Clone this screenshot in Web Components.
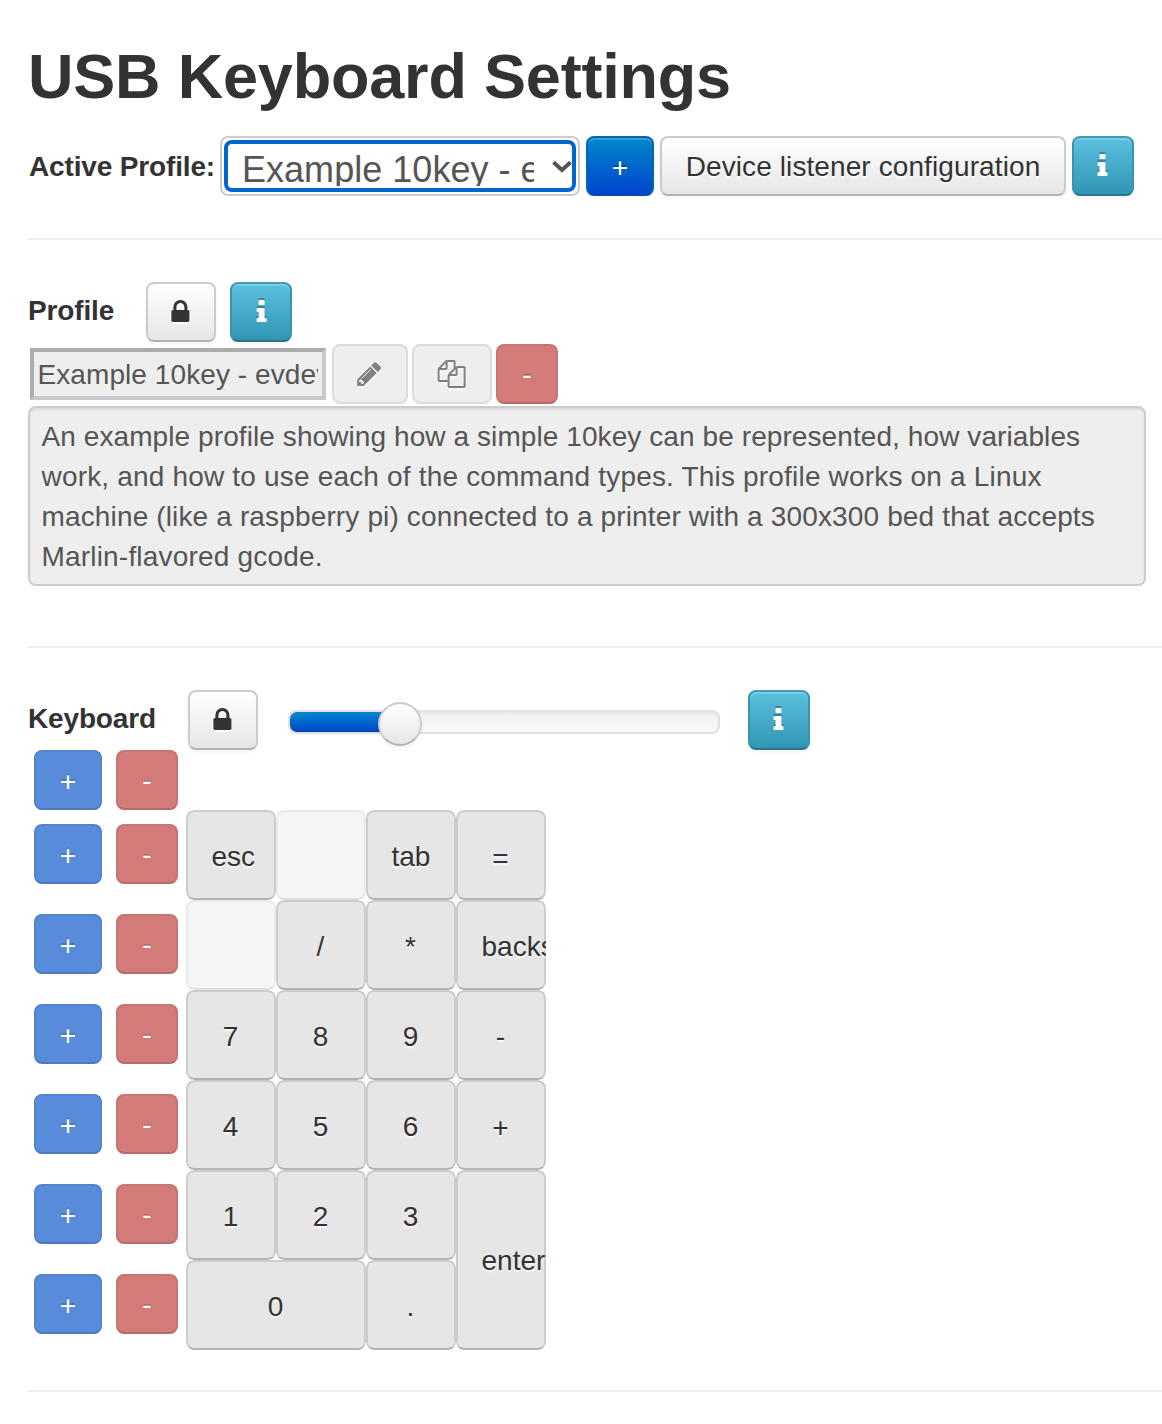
<!DOCTYPE html>
<html lang="en">
<head>
<meta charset="utf-8">
<title>USB Keyboard Settings</title>
<style>
html,body{margin:0;padding:0;background:#fff}
body{font:28px/40px "Liberation Sans",Arial,sans-serif;color:#333;overflow:hidden;height:1424px}
</style>
</head>
<body>
<keyboard-settings></keyboard-settings>
<script>
const define = (name, html) => customElements.define(name, class extends HTMLElement {
  connectedCallback() {
    if (this.shadowRoot) return;
    const root = this.attachShadow({ mode: 'open' });
    root.innerHTML = typeof html === 'function' ? html(this) : html;
  }
});

// name: [advance width, horizontal nudge in px, outline]
const ICONS = {
  lock: [1152, -.6, 'M320 768h512v192q0 106-75 181t-181 75-181-75-75-181v-192zM1152 672v-576q0-40-28-68t-68-28h-960q-40 0-68 28t-28 68v576q0 40 28 68t68 28h32v192q0 184 132 316t316 132 316-132 132-316v-192h32q40 0 68-28t28-68z'],
  info: [640, -.5, 'M640 192v-128q0-26-19-45t-45-19h-512q-26 0-45 19t-19 45v128q0 26 19 45t45 19h64v384h-64q-26 0-45 19t-19 45v128q0 26 19 45t45 19h384q26 0 45-19t19-45v-576h64q26 0 45-19t19-45zM512 1344v-192q0-26-19-45t-45-19h-256q-26 0-45 19t-19 45v192q0 26 19 45t45 19h256q26 0 45-19t19-45z'],
  pencil: [1536, -.8, 'M363 0l91 91-235 235-91-91v-107h128v-128h107zM886 928q0 22-22 22-10 0-17-7l-542-542q-7-7-7-17 0-22 22-22 10 0 17 7l542 542q7 7 7 17zM832 1120l416-416-832-832h-416v416zM1515 1024q0-53-37-90l-166-166-416 416 166 165q36 38 90 38 53 0 91-38l235-234q37-39 37-91z'],
  copy: [1792, -.4, 'M1696 1152q40 0 68-28t28-68v-1216q0-40-28-68t-68-28h-960q-40 0-68 28t-28 68v288h-544q-40 0-68 28t-28 68v672q0 40 20 88t48 76l408 408q28 28 76 48t88 20h416q40 0 68-28t28-68v-328q68 40 128 40h416zM1152 939l-299-299h299v299zM512 1323l-299-299h299v299zM708 676l316 316v416h-384v-416q0-40-28-68t-68-28h-416v-640h512v256q0 40 20 88t48 76zM1664-128v1152h-384v-416q0-40-28-68t-68-28h-416v-640h896z']
};

define('ui-icon', el => {
  const [w, nudge, d] = ICONS[el.getAttribute('name')];
  const dx = Number(el.getAttribute('dx') ?? nudge);
  return `<style>:host{display:block;height:28px;filter:var(--icon-shadow,none)}svg{display:block;overflow:visible}</style>
  <svg width="${w / 64}" height="28" viewBox="${-dx * 64} -1536 ${w} 1792"><path fill="currentColor" transform="scale(1,-1)" d="${d}"/></svg>`;
});

define('ui-button', `<style>
:host{display:flex;box-sizing:border-box;height:60px;width:62px;flex:none;align-items:center;justify-content:center;white-space:nowrap;
 border:2px solid #ccc;border-bottom-color:#b3b3b3;border-radius:8px;color:#333;
 background:linear-gradient(#fff,#e6e6e6) padding-box;background-color:#f5f5f5;
 text-shadow:0 2px 2px rgba(255,255,255,.75);--icon-shadow:drop-shadow(0 2px 1px rgba(255,255,255,.75));
 box-shadow:inset 0 2px 0 rgba(255,255,255,.2),0 2px 4px rgba(0,0,0,.05)}
:host([kind=primary]),:host([kind=info]),:host([kind=danger]){color:#fff;text-shadow:0 -2px 0 rgba(0,0,0,.25);--icon-shadow:drop-shadow(0 -2px 0 rgba(0,0,0,.25));
 background-clip:border-box;background-origin:padding-box;background-repeat:repeat-x}
:host([kind=primary]){width:68px;background-color:#04c;background-image:linear-gradient(#08c,#04c);border-color:#0069ad #0067b4 #004bae}
:host([kind=info]){background-color:#2f96b4;background-image:linear-gradient(#5bc0de,#2f96b4);border-color:#3f9db7 #3a93ac #2b7489}
:host([off]){box-shadow:none}
:host([off]:not([kind])){background:#eee;border-color:#dcdcdc;color:#808080}
:host([kind=primary][off]){background:#598bdb;border-color:#5484cf #5484cf #4d79be}
:host([kind=danger][off]){background:#d27b79;border-color:#c67573 #c67573 #b66c6a}
:host([kind][off]){text-shadow:0 -2px 0 rgba(0,0,0,.14)}
span{position:relative;top:var(--dy,0px);letter-spacing:var(--ls,0)}
</style><span><slot></slot></span>`);

define('section-title', `<style>:host{display:block;font-weight:bold;flex:none;white-space:nowrap;letter-spacing:-.15px}</style><slot></slot>`);

define('rule-line', `<style>:host{display:block;height:2px;background:#eee;flex:none}</style>`);

define('profile-select', `<style>
:host{display:block;box-sizing:border-box;width:360px;height:60px;flex:none;border:2px solid #ccc;border-radius:8px;padding:2px;background:#fff}
.ring{display:flex;box-sizing:border-box;height:52px;border:4px solid #06c;border-radius:8px;padding:2px 0 2px 14px;color:#555;align-items:flex-start}
.text{width:292px;height:40px;overflow:hidden;white-space:nowrap;font-size:36px;line-height:48px;letter-spacing:.03px}
svg{margin:14px 0 0 18px;flex:none;overflow:visible}
</style><div class="ring"><div class="text"><slot></slot></div><svg width="20" height="14" viewBox="0 0 20 14"><path d="M1.500 2.200 10 10l8.500-7.800" fill="none" stroke="#555" stroke-width="4"/></svg></div>`);

define('name-field', `<style>
:host{display:block;box-sizing:border-box;width:296px;height:52px;margin:0 2px 0 2px;flex:none;border:4px solid;border-color:#acacac #c9c9c9 #c9c9c9 #acacac;background:#eee;padding:2px 4px;color:#555}
div{overflow:hidden;white-space:nowrap;height:40px;line-height:42px;text-indent:-.5px;letter-spacing:.08px}
</style><div><slot></slot></div>`);

define('description-box', `<style>
:host{display:block;box-sizing:border-box;width:1118px;height:180px;border:2px solid #ccc;border-radius:8px;background:#eee;padding:9px 12px 7px 11.500px;color:#555;box-shadow:inset 0 2px 2px rgba(0,0,0,.075);white-space:nowrap}
</style><slot></slot>`);

define('zoom-slider', `<style>
:host{display:flex;align-items:center;box-sizing:border-box;width:432px;height:24px;flex:none;border:2px solid #e1e1e1;border-radius:8px;background:linear-gradient(#f0f0f0,#f9f9f9);box-shadow:inset 0 2px 3px rgba(0,0,0,.04)}
.fill{width:110px;height:20px;border-radius:7px 0 0 7px;background:linear-gradient(#0088cc,#0044cc);box-shadow:inset 0 -1px 0 rgba(0,0,0,.15)}
.knob{box-sizing:border-box;width:44px;height:44px;margin:4px 0 0 -22px;border:2px solid #ccc;border-bottom-color:#b3b3b3;border-radius:50%;background:linear-gradient(#fff,#e6e6e6);box-shadow:0 2px 4px rgba(0,0,0,.05)}
</style><div class="fill"></div><div class="knob"></div>`);

define('key-cap', `<style>
:host{display:flex;align-items:center;box-sizing:border-box;min-width:0;border:2px solid #ccc;border-bottom-color:#b3b3b3;border-radius:8px;background:#e6e6e6;padding-left:23.500px;padding-right:24.500px;clip-path:inset(0 round 8px);text-shadow:0 2px 2px rgba(255,255,255,.75)}
:host([blank]){opacity:.42}
:host([wide]){grid-column:span 2}
:host([tall]){grid-row:span 2}
div{flex:1;min-width:0;text-align:center;white-space:nowrap;position:relative;top:var(--dy,2px)}
</style><div><slot></slot></div>`);

define('row-controls', `<style>:host{display:flex;gap:14px;height:60px}</style>
<ui-button kind="primary" off style="--dy:2px">+</ui-button><ui-button kind="danger" off style="--dy:1px">-</ui-button>`);

define('key-board', `<style>
:host{display:flex;gap:8px;padding-left:6px}
.rows{display:flex;flex-direction:column;gap:30px}
.rows :first-child{margin-bottom:-16px}
.keys{display:grid;grid-template-columns:repeat(4,90px);grid-auto-rows:90px;margin-top:60px}
</style>
<div class="rows">${'<row-controls></row-controls>'.repeat(7)}</div>
<div class="keys">
<key-cap>esc</key-cap><key-cap blank></key-cap><key-cap>tab</key-cap><key-cap style="--dy:4px">=</key-cap>
<key-cap blank></key-cap><key-cap>/</key-cap><key-cap>*</key-cap><key-cap>backs</key-cap>
<key-cap>7</key-cap><key-cap>8</key-cap><key-cap>9</key-cap><key-cap style="--dy:2px">-</key-cap>
<key-cap>4</key-cap><key-cap>5</key-cap><key-cap>6</key-cap><key-cap style="--dy:3px">+</key-cap>
<key-cap>1</key-cap><key-cap>2</key-cap><key-cap>3</key-cap><key-cap tall style="--dy:1px">enter</key-cap>
<key-cap wide>0</key-cap><key-cap>.</key-cap>
</div>`);

define('keyboard-settings', `<style>
:host{display:flex;flex-direction:column;padding:36px 0 0 28px}
h2{margin:0 0 20px;font-size:63px;line-height:80px;font-weight:bold;white-space:nowrap;letter-spacing:-.2px}
.row{display:flex;align-items:center;height:60px}
.active{gap:6px}
.active section-title{width:185px;padding:2px 0 0 1px}
.head section-title{padding-bottom:2px}
.names{margin:2px 0}
.names ui-button{margin-left:4px}
</style>
<h2>USB Keyboard Settings</h2>
<div class="row active">
 <section-title>Active Profile:</section-title>
 <profile-select>Example 10key - ev</profile-select>
 <ui-button kind="primary" style="--dy:2px">+</ui-button>
 <ui-button style="width:406px;--dy:1px;--ls:.1px">Device listener configuration</ui-button>
 <ui-button kind="info"><ui-icon name="info"></ui-icon></ui-button>
</div>
<rule-line style="margin:42px 0"></rule-line>
<div class="row head">
 <section-title style="width:118px">Profile</section-title>
 <ui-button style="width:70px;margin-right:14px"><ui-icon name="lock"></ui-icon></ui-button>
 <ui-button kind="info"><ui-icon name="info" dx="0.6"></ui-icon></ui-button>
</div>
<div class="row names">
 <name-field>Example 10key - evdev</name-field>
 <ui-button off style="width:76px"><ui-icon name="pencil"></ui-icon></ui-button>
 <ui-button off style="width:80px"><ui-icon name="copy"></ui-icon></ui-button>
 <ui-button kind="danger" off style="--dy:1px">-</ui-button>
</div>
<description-box>
<div style="letter-spacing:.085px">An example profile showing how a simple 10key can be represented, how variables</div>
<div style="letter-spacing:.18px">work, and how to use each of the command types. This profile works on a Linux</div>
<div style="letter-spacing:.145px">machine (like a raspberry pi) connected to a printer with a 300x300 bed that accepts</div>
<div style="letter-spacing:.19px">Marlin-flavored gcode.</div>
</description-box>
<rule-line style="margin:60px 0 42px"></rule-line>
<div class="row head">
 <section-title style="width:160px">Keyboard</section-title>
 <ui-button style="width:70px;margin-right:30px"><ui-icon name="lock"></ui-icon></ui-button>
 <zoom-slider style="margin:4px 28px 0 0"></zoom-slider>
 <ui-button kind="info"><ui-icon name="info"></ui-icon></ui-button>
</div>
<key-board></key-board>
<rule-line style="margin-top:40px"></rule-line>`);
</script>
</body>
</html>
